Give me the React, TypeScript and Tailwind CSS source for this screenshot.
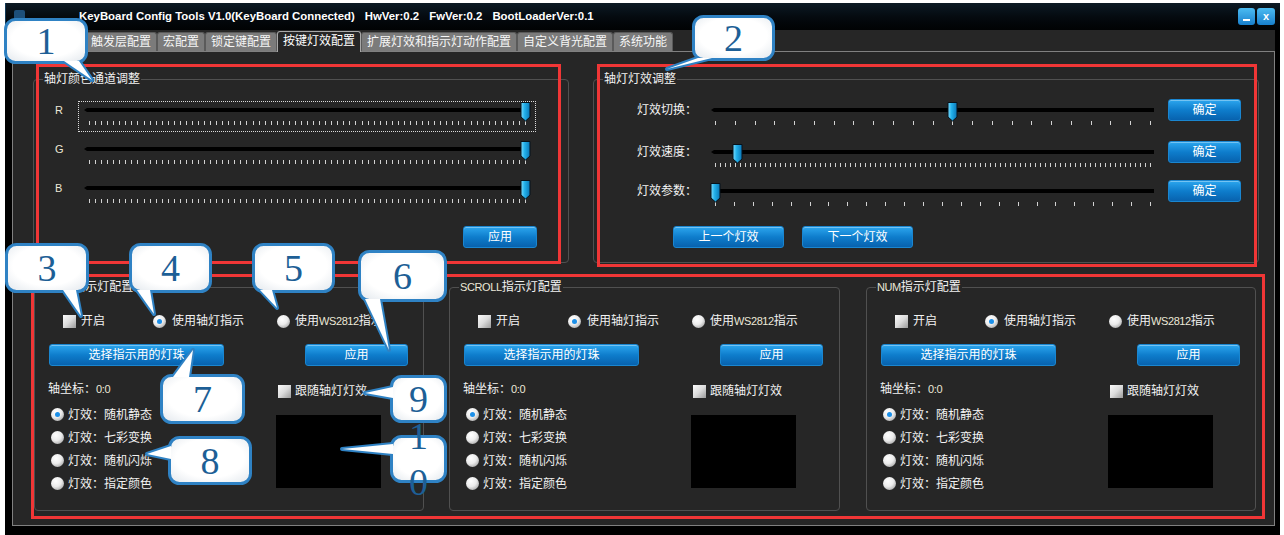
import React from "react";

const F = "font-['Liberation_Sans','Noto_Sans_CJK_SC',sans-serif]";
const ASC = "font-['Liberation_Sans',sans-serif] text-[11px] tracking-[-0.4px] text-[#ece8d8]";

function Slider({ w, h, ty, ticks, pos, inset }: { w: number; h: number; ty: number; ticks: number; pos: number; inset: number }) {
  const span = w - 2 * inset;
  const tx = Array.from({ length: ticks }, (_, i) => Math.round(inset + (i * span) / (ticks - 1)));
  const cx = Math.round(inset + pos * span) + 0.5;
  return (
    <svg width={w} height={h} className="block overflow-visible shrink-0">
      <defs>
        <linearGradient id="thumbg" x1="0" x2="1" y1="0" y2="0">
          <stop offset="0" stopColor="#7adcff" />
          <stop offset="0.4" stopColor="#22b0ea" />
          <stop offset="1" stopColor="#0a76b6" />
        </linearGradient>
      </defs>
      <path d={`M0 ${ty} L3 ${ty - 2} H${w} V${ty + 2} H3 Z`} fill="#000" />
      {tx.map((x, i) => (
        <rect key={i} x={x} y={ty + 11} width={1} height={4} fill="#d2d2d2" />
      ))}
      <path
        d={`M${cx - 4.5} ${ty - 7.5} H${cx + 4.5} V${ty + 7} L${cx} ${ty + 11} L${cx - 4.5} ${ty + 7} Z`}
        fill="url(#thumbg)"
        stroke="#06121c"
        strokeWidth="1"
      />
    </svg>
  );
}

function Btn({ children, className = "" }: { children: React.ReactNode; className?: string }) {
  return (
    <div
      className={`flex items-center justify-center h-[22px] shrink-0 rounded-[3px] border border-[#1a86d0] bg-linear-to-b from-[#2ba6ee] via-[#0e7dcc] to-[#0862ae] shadow-[inset_0_1px_0_rgba(255,255,255,0.35)] text-white text-[12px] leading-none ${className}`}
    >
      {children}
    </div>
  );
}

const Check = () => <span className="inline-block shrink-0 w-[13px] h-[13px] bg-linear-to-br from-[#fafafa] via-[#dcdcdc] to-[#9a9a9a]" />;

const Radio = ({ on = false }: { on?: boolean }) => (
  <span className="inline-flex shrink-0 items-center justify-center w-[13px] h-[13px] rounded-full bg-[radial-gradient(circle_at_38%_32%,#ffffff_0%,#ececec_45%,#8a8a8a_100%)]">
    {on && <span className="w-[5px] h-[5px] rounded-full bg-[#1b8fe8]" />}
  </span>
);

function Group({ title, className = "", children }: { title: React.ReactNode; className?: string; children: React.ReactNode }) {
  return (
    <div className={`relative shrink-0 border border-[#505050] rounded-[4px] ${className}`}>
      <div className="absolute left-[9px] top-[-9px] px-[1px] bg-[#262626] text-[12px] leading-[17px] text-[#f2f2f2] whitespace-nowrap">{title}</div>
      {children}
    </div>
  );
}

function TitleBar() {
  return (
    <div className="h-[27px] shrink-0 flex items-center bg-linear-to-b from-[#0d1a25] via-[#050b10] to-[#010304] border-l border-[#133a58]">
      <div className="ml-[8px] w-[11px] h-[13px] rounded-[2px] bg-[#1d4f7a]" />
      <div className="ml-[54px] flex text-[11.4px] font-bold text-white whitespace-nowrap font-['Liberation_Sans',sans-serif]">
        <span>KeyBoard Config Tools V1.0(KeyBoard Connected)</span>
        <span className="ml-[10px]">HwVer:0.2</span>
        <span className="ml-[10px]">FwVer:0.2</span>
        <span className="ml-[10px]">BootLoaderVer:0.1</span>
      </div>
      <div className="ml-auto mr-[5px] flex gap-[2px]">
        <div className="relative w-[17px] h-[17px] rounded-[3px] bg-linear-to-b from-[#4cbcf2] to-[#1780cc] flex items-end justify-center pb-[4px]">
          <div className="w-[7px] h-[2px] bg-white" />
        </div>
        <div className="w-[18px] h-[17px] rounded-[3px] bg-linear-to-b from-[#4cbcf2] to-[#1780cc] flex items-center justify-center text-white text-[11px] font-bold leading-none font-['Liberation_Sans',sans-serif]">
          x
        </div>
      </div>
    </div>
  );
}

const TABS = ["按键层配置", "触发层配置", "宏配置", "锁定键配置", "按键灯效配置", "扩展灯效和指示灯动作配置", "自定义背光配置", "系统功能"];

function Tabs() {
  return (
    <div className="ml-[7px] mr-[5px] h-[21px] shrink-0 bg-[#262626] flex items-end pl-[1px] text-[12px]">
      {TABS.map((t) =>
        t === "按键灯效配置" ? (
          <div key={t} className="relative z-10 h-[21px] mb-[-1px] px-[5px] border-x border-t border-[#a8a8a8] rounded-t-[3px] bg-[#262626] text-white leading-[19px] whitespace-nowrap">
            {t}
          </div>
        ) : (
          <div key={t} className="h-[19px] px-[5px] border-x border-t border-[#5a5a5a] rounded-t-[3px] bg-[#7b7b7b] text-[#f6f6f6] leading-[18px] whitespace-nowrap">
            {t}
          </div>
        )
      )}
    </div>
  );
}

function ColorGroup() {
  const rows = ["R", "G", "B"];
  return (
    <Group title="轴灯颜色通道调整" className="w-[536px] h-[184px]">
      <div className="pl-[21px] pr-[31px] pt-[21px] flex flex-col">
        {rows.map((l, i) => (
          <div key={l} className={`flex items-start ${i > 0 ? "mt-[8px]" : ""}`}>
            <div className={`w-[23px] h-[18px] leading-[18px] ${ASC}`}>{l}</div>
            <div className={`w-[458px] h-[31px] border px-[5px] ${i === 0 ? "border-dotted border-[#dcdcdc]" : "border-transparent"}`}>
              <Slider w={446} h={29} ty={8} ticks={73} pos={1} inset={5} />
            </div>
          </div>
        ))}
        <Btn className="self-end w-[74px] mt-[16px]">应用</Btn>
      </div>
    </Group>
  );
}

function EffectGroup() {
  const rows = [
    { l: "灯效切换：", ticks: 23, pos: 12 / 22, mt: "" },
    { l: "灯效速度：", ticks: 88, pos: 0.05, mt: "mt-[20px]" },
    { l: "灯效参数：", ticks: 24, pos: 0, mt: "mt-[17px]" },
  ];
  return (
    <Group title="轴灯灯效调整" className="w-[666px] h-[184px]">
      <div className="pl-[43px] pt-[19px] flex flex-col text-[12px] text-[#f2f2f2]">
        {rows.map((r) => (
          <div key={r.l} className={`flex items-center h-[22px] ${r.mt}`}>
            <div className="w-[74px] whitespace-nowrap">{r.l}</div>
            <Slider w={443} h={22} ty={11} ticks={r.ticks} pos={r.pos} inset={4} />
            <Btn className="ml-[14px] w-[73px]">确定</Btn>
          </div>
        ))}
        <div className="flex gap-[18px] pl-[36px] mt-[24px]">
          <Btn className="w-[111px]">上一个灯效</Btn>
          <Btn className="w-[111px]">下一个灯效</Btn>
        </div>
      </div>
    </Group>
  );
}

const EFFECTS = ["随机静态", "七彩变换", "随机闪烁", "指定颜色"];

function Indicator({ prefix, className }: { prefix: string; className: string }) {
  return (
    <Group
      title={
        <>
          <span className={ASC}>{prefix}</span>指示灯配置
        </>
      }
      className={className}
    >
      <div className="flex flex-col pt-[24px] text-[12px] text-[#f2f2f2]">
        <div className="flex items-center h-[18px] whitespace-nowrap">
          <div className="w-[118px] pl-[28px] flex items-center gap-[5px]">
            <Check />
            <span>开启</span>
          </div>
          <div className="w-[124px] flex items-center gap-[6px]">
            <Radio on />
            <span>使用轴灯指示</span>
          </div>
          <div className="flex items-center gap-[5px]">
            <Radio />
            <span>
              使用<span className={`${ASC} text-[#dfe8f4]`}>WS2812</span>指示
            </span>
          </div>
        </div>
        <div className="flex mt-[14px] pl-[14px]">
          <Btn className="w-[175px]">选择指示用的灯珠</Btn>
          <Btn className="w-[103px] ml-[81px]">应用</Btn>
        </div>
        <div className="flex mt-[14px]">
          <div className="w-[228px] pl-[13px] flex flex-col">
            <div className="h-[18px] leading-[18px] whitespace-nowrap">
              轴坐标：<span className={ASC}>0:0</span>
            </div>
            <div className="pl-[3px] mt-[5px] flex flex-col">
              {EFFECTS.map((e, i) => (
                <div key={e} className="h-[23px] flex items-center gap-[4px] whitespace-nowrap">
                  <Radio on={i === 0} />
                  <span>灯效：{e}</span>
                </div>
              ))}
            </div>
          </div>
          <div className="pl-[13px] flex flex-col">
            <div className="mt-[2px] h-[18px] pl-[2px] flex items-center gap-[4px] whitespace-nowrap">
              <Check />
              <span>跟随轴灯灯效</span>
            </div>
            <div className="mt-[15px] w-[105px] h-[73px] bg-black" />
          </div>
        </div>
      </div>
    </Group>
  );
}

type C = { n: string; x: number; y: number; w: number; h: number; t: number[][] };
const CALLOUTS: C[] = [
  { n: "1", x: 4, y: 18, w: 84, h: 46, t: [[64, 61], [79, 61], [92, 80]] },
  { n: "2", x: 692, y: 15, w: 83, h: 46, t: [[698, 58], [712, 58], [667, 69]] },
  { n: "3", x: 5, y: 243, w: 84, h: 50, t: [[63, 290], [76, 290], [81, 316]] },
  { n: "4", x: 129, y: 243, w: 83, h: 50, t: [[137, 290], [150, 290], [154, 314]] },
  { n: "5", x: 252, y: 243, w: 83, h: 50, t: [[260, 290], [272, 290], [277, 308]] },
  { n: "6", x: 358, y: 250, w: 89, h: 52, t: [[365, 299], [380, 299], [389, 350]] },
  { n: "7", x: 160, y: 374, w: 85, h: 50, t: [[173, 377], [189, 377], [193, 350]] },
  { n: "8", x: 168, y: 436, w: 84, h: 49, t: [[171, 446], [171, 459], [147, 454]] },
  { n: "9", x: 390, y: 375, w: 57, h: 48, t: [[393, 387], [393, 398], [365, 393]] },
  { n: "10", x: 390, y: 435, w: 57, h: 48, t: [[393, 444], [393, 454], [342, 449]] },
];

function Callouts() {
  return (
    <>
      <svg width={1284} height={535} className="absolute left-0 top-0 pointer-events-none">
        <defs>
          <radialGradient id="cfill" cx="0.5" cy="0.45" r="0.7">
            <stop offset="0.6" stopColor="#ffffff" />
            <stop offset="1" stopColor="#e4e9ee" />
          </radialGradient>
        </defs>
        {CALLOUTS.map((c) => {
          const pts = c.t.map((p) => p.join(",")).join(" ");
          return (
            <g key={c.n}>
              <polygon points={pts} fill="#ffffff" stroke="#2f82c4" strokeWidth={4} strokeLinejoin="round" />
              <rect x={c.x + 1.5} y={c.y + 1.5} width={c.w - 3} height={c.h - 3} rx={10} fill="url(#cfill)" stroke="#2f82c4" strokeWidth={3} />
              <polygon points={pts} fill="#ffffff" />
            </g>
          );
        })}
      </svg>
      {CALLOUTS.map((c) => (
        <div
          key={c.n}
          className="absolute flex items-center justify-center pointer-events-none font-['Liberation_Serif',serif] text-[38px] text-[#1d5f96]"
          style={{ left: c.x, top: c.y, width: c.w, height: c.h }}
        >
          {c.n === "10" ? <div className="w-[22px] break-all text-center leading-[46px]">10</div> : <div className="leading-none">{c.n}</div>}
        </div>
      ))}
    </>
  );
}

function RedBoxes() {
  return (
    <>
      <div className="absolute left-[36px] top-[64px] w-[525px] h-[200px] border-[3px] border-[#f03636] pointer-events-none" />
      <div className="absolute left-[597px] top-[64px] w-[660px] h-[203px] border-[3px] border-[#f03636] pointer-events-none" />
      <div className="absolute left-[31px] top-[274px] w-[1234px] h-[245px] border-[3px] border-[#f03636] pointer-events-none" />
    </>
  );
}

export default function App() {
  return (
    <div className={`relative w-[1284px] h-[535px] overflow-hidden bg-white ${F}`}>
      <div className="ml-[5px] pt-[3px] w-[1275px] h-[535px]">
        <div className="w-[1275px] h-[532px] bg-black flex flex-col">
          <TitleBar />
          <Tabs />
          <div className="ml-[7px] mr-[5px] h-[475px] shrink-0 border border-[#808080] bg-[#262626]">
            <div className="flex ml-[20px] mt-[27px] gap-[24px]">
              <ColorGroup />
              <EffectGroup />
            </div>
            <div className="flex ml-[21px] mt-[24px]">
              <Indicator prefix="CAPS" className="w-[390px] h-[224px]" />
              <Indicator prefix="SCROLL" className="w-[391px] h-[224px] ml-[25px]" />
              <Indicator prefix="NUM" className="w-[390px] h-[224px] ml-[26px]" />
            </div>
          </div>
        </div>
      </div>
      <RedBoxes />
      <Callouts />
    </div>
  );
}
